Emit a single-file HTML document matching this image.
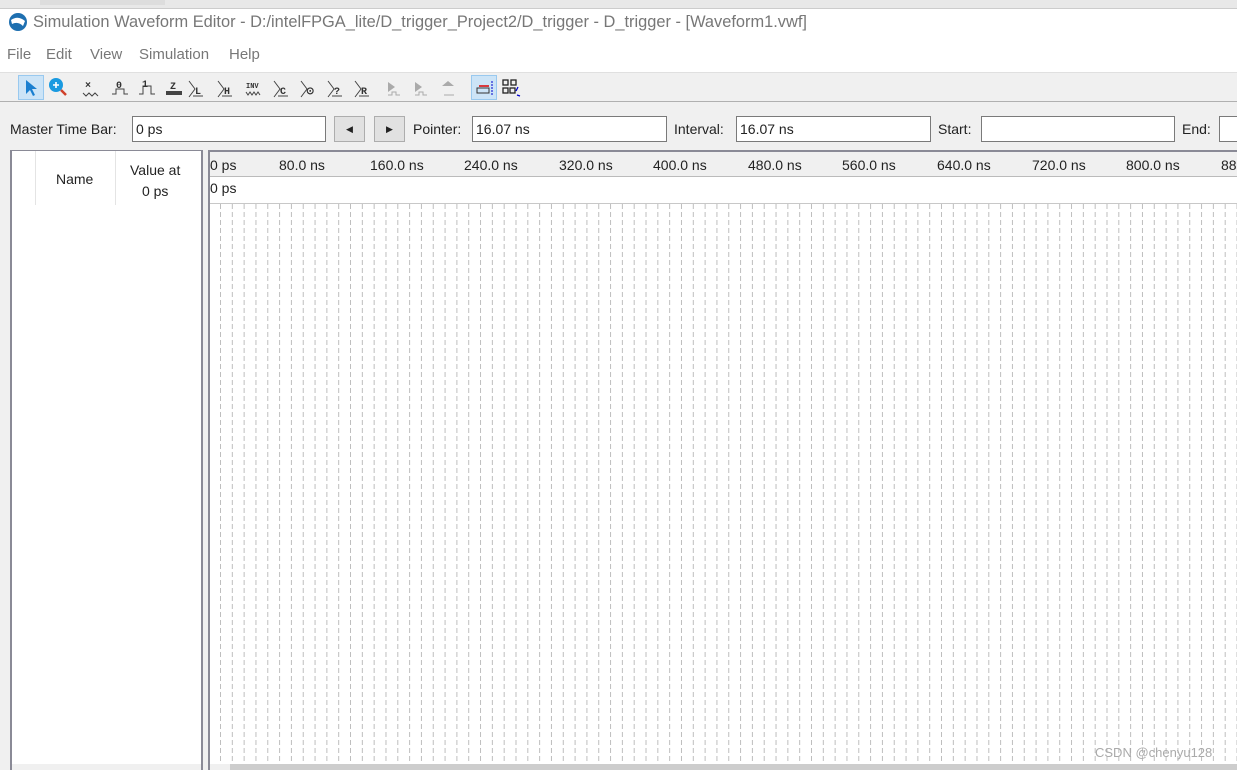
<!DOCTYPE html>
<html><head><style>
*{margin:0;padding:0;box-sizing:border-box}
body{width:1237px;height:770px;overflow:hidden;background:#f0f0f0;font-family:"Liberation Sans",sans-serif;color:#222;position:relative;font-size:14px}
.a{position:absolute;white-space:nowrap}
.inp{position:absolute;background:#fff;border:1px solid #7a7a7a;height:26px;top:116px;font-size:14px;padding:4px 3px}
.lbl{position:absolute;top:121px;font-size:14px;color:#222}
.btn{position:absolute;top:116px;width:31px;height:26px;background:#e1e1e1;border:1px solid #adadad;font-size:9px;text-align:center;line-height:24px}
.tk{position:absolute;top:157px;font-size:14px;color:#222;white-space:nowrap}
.ic{position:absolute;top:79px;width:20px;height:18px}
.ic svg{display:block}
</style></head><body>
<div class="a" style="left:0;top:0;width:1237px;height:9px;background:#e8e8e8;border-bottom:1px solid #ccc"></div>
<div class="a" style="left:40px;top:0;width:125px;height:5px;background:#ddd"></div>
<div class="a" style="left:0;top:9px;width:1237px;height:27px;background:#fff"></div>
<svg class="a" style="left:8px;top:12px" width="20" height="20"><circle cx="10" cy="10" r="9" fill="#1e6fb0"/><path d="M3 8 Q10 3 17 9 L15 14 Q10 9 4 12Z" fill="#fff"/></svg>
<div class="a" style="left:33px;top:13px;font-size:16.4px;color:#777">Simulation Waveform Editor - D:/intelFPGA_lite/D_trigger_Project2/D_trigger - D_trigger - [Waveform1.vwf]</div>
<div class="a" style="left:0;top:36px;width:1237px;height:36px;background:#fff"></div>
<div class="a" style="left:7px;top:46px;font-size:15px;color:#777">File</div>
<div class="a" style="left:46px;top:46px;font-size:15px;color:#777">Edit</div>
<div class="a" style="left:90px;top:46px;font-size:15px;color:#777">View</div>
<div class="a" style="left:139px;top:46px;font-size:15px;color:#777">Simulation</div>
<div class="a" style="left:229px;top:46px;font-size:15px;color:#777">Help</div>
<div class="a" style="left:0;top:72px;width:1237px;height:30px;background:#f0f0f0;border-top:1px solid #e0e0e0;border-bottom:1px solid #b0b0b0"></div>
<div class="a" style="left:18px;top:75px;width:26px;height:25px;background:#cce4f7;border:1px solid #99c9ef"></div>
<svg class="a" style="left:24px;top:79px" width="14" height="18"><path d="M2 1 L2 15 L6 11 L9 17 L11 16 L8 10 L13 10Z" fill="#1a7fd0"/></svg>
<svg class="a" style="left:48px;top:77px" width="20" height="20"><circle cx="8" cy="8" r="7" fill="#1a9ae0"/><path d="M5 8h6M8 5v6" stroke="#fff" stroke-width="1.6"/><path d="M13 13l5 5" stroke="#d0402a" stroke-width="2.5"/></svg>
<svg class="a" style="left:80px;top:78px" width="460" height="20" font-family="Liberation Mono,monospace" font-weight="bold" font-size="10" fill="#333">
<g stroke="#444" fill="none" stroke-width="1">
<path d="M3 15 l3 3 l3 -3 l3 3 l3 -3 l3 3"/>
<path d="M32 16h4v-5h8v5h4"/>
<path d="M59 16h4v-8h8v8h4"/>
<path d="M109 3l6 8l-6 8M138 3l6 8l-6 8M194 3l6 8l-6 8M221 3l6 8l-6 8M248 3l6 8l-6 8M275 3l6 8l-6 8"/>
<path d="M113 18h10M142 18h10M198 18h10M252 18h10M279 18h10"/>
<path d="M166 14 l2 3 l2 -3 l2 3 l2 -3 l2 3 l2 -3 l2 3"/>
</g>
<text x="5" y="10">×</text><text x="36" y="10">0</text><text x="62" y="9">1</text>
<rect x="86" y="13" width="16" height="4" fill="#444"/><text x="90" y="11">Z</text>
<text x="115" y="16">L</text><text x="144" y="16">H</text>
<text x="166" y="10" font-size="7">INV</text>
<text x="200" y="16">C</text><text x="226" y="16">⊙</text><text x="254" y="16">?</text><text x="281" y="16">R</text>
<g fill="#aaa"><path d="M308 4l7 5l-7 5z"/><path d="M335 4l7 5l-7 5z"/><path d="M362 8l6-5l6 5z"/>
<path d="M308 17h4v-3h4v3h4M335 17h4v-3h4v3h4M364 17h10" stroke="#aaa" fill="none"/></g>
</svg>
<div class="a" style="left:471px;top:75px;width:26px;height:25px;background:#cce4f7;border:1px solid #99c9ef"></div>
<svg class="a" style="left:474px;top:79px" width="22" height="18"><path d="M5 7h10" stroke="#d00" stroke-width="1.5"/><rect x="3" y="9" width="12" height="5" fill="none" stroke="#333"/><path d="M18 2v15" stroke="#00c" stroke-dasharray="2 1"/></svg>
<svg class="a" style="left:501px;top:78px" width="22" height="20" fill="none" stroke="#222" stroke-width="1.3"><rect x="2" y="2" width="5" height="5"/><rect x="10" y="2" width="5" height="5"/><rect x="2" y="10" width="5" height="5"/><rect x="9" y="10" width="5" height="5"/><path d="M17 9l-2 4M16 17l3 1" stroke="#00c"/></svg>
<div class="lbl" style="left:10px">Master Time Bar:</div>
<div class="inp" style="left:132px;width:194px">0 ps</div>
<div class="btn" style="left:334px">◀</div><div class="btn" style="left:374px">▶</div>
<div class="lbl" style="left:413px">Pointer:</div>
<div class="inp" style="left:472px;width:195px">16.07 ns</div>
<div class="lbl" style="left:674px">Interval:</div>
<div class="inp" style="left:736px;width:195px">16.07 ns</div>
<div class="lbl" style="left:938px">Start:</div>
<div class="inp" style="left:981px;width:194px"></div>
<div class="lbl" style="left:1182px">End:</div>
<div class="inp" style="left:1219px;width:30px"></div>
<div class="a" style="left:10px;top:150px;width:193px;height:620px;background:#fff;border:1px solid #8a8a96;border-width:1px 2px 0 2px"></div>
<div class="a" style="left:35px;top:151px;width:1px;height:54px;background:#e4e4e4"></div>
<div class="a" style="left:115px;top:151px;width:1px;height:54px;background:#e4e4e4"></div>
<div class="a" style="left:56px;top:171px;font-size:14px">Name</div>
<div class="a" style="left:130px;top:160px;font-size:14px;text-align:center;line-height:21px">Value at<br>0 ps</div>
<div class="a" style="left:12px;top:764px;width:189px;height:6px;background:#f0f0f0"></div>
<div class="a" style="left:208px;top:150px;width:1040px;height:620px;background:#fff;border-left:2px solid #8a8a96;border-top:2px solid #8a8a96"></div>
<div class="a" style="left:210px;top:152px;width:1027px;height:25px;background:#f0f0f0;border-bottom:1px solid #bbb;overflow:hidden">
<div class="tk" style="left:0;top:5px">0 ps</div>
<div class="tk" style="left:69px;top:5px">80.0 ns</div>
<div class="tk" style="left:160px;top:5px">160.0 ns</div>
<div class="tk" style="left:254px;top:5px">240.0 ns</div>
<div class="tk" style="left:349px;top:5px">320.0 ns</div>
<div class="tk" style="left:443px;top:5px">400.0 ns</div>
<div class="tk" style="left:538px;top:5px">480.0 ns</div>
<div class="tk" style="left:632px;top:5px">560.0 ns</div>
<div class="tk" style="left:727px;top:5px">640.0 ns</div>
<div class="tk" style="left:822px;top:5px">720.0 ns</div>
<div class="tk" style="left:916px;top:5px">800.0 ns</div>
<div class="tk" style="left:1011px;top:5px">880.0 ns</div>
</div>
<div class="a" style="left:210px;top:180px;font-size:14px">0 ps</div>
<div class="a" style="left:210px;top:203px;width:1027px;height:1px;background:#c8c8c8"></div>
<svg class="a" style="left:210px;top:204px" width="1027" height="560">
<defs><pattern id="p" x="10" y="0" width="11.82" height="8" patternUnits="userSpaceOnUse"><line x1="0.5" y1="0" x2="0.5" y2="5" stroke="#bdbdbd" stroke-width="1"/></pattern></defs>
<rect width="1027" height="560" fill="url(#p)"/></svg>
<div class="a" style="left:210px;top:764px;width:1027px;height:6px;background:#f0f0f0"></div>
<div class="a" style="left:230px;top:764px;width:1007px;height:6px;background:#cdcdcd"></div>
<div class="a" style="left:1095px;top:745px;font-size:13px;color:#aaa">CSDN @chenyu128</div>
</body></html>
